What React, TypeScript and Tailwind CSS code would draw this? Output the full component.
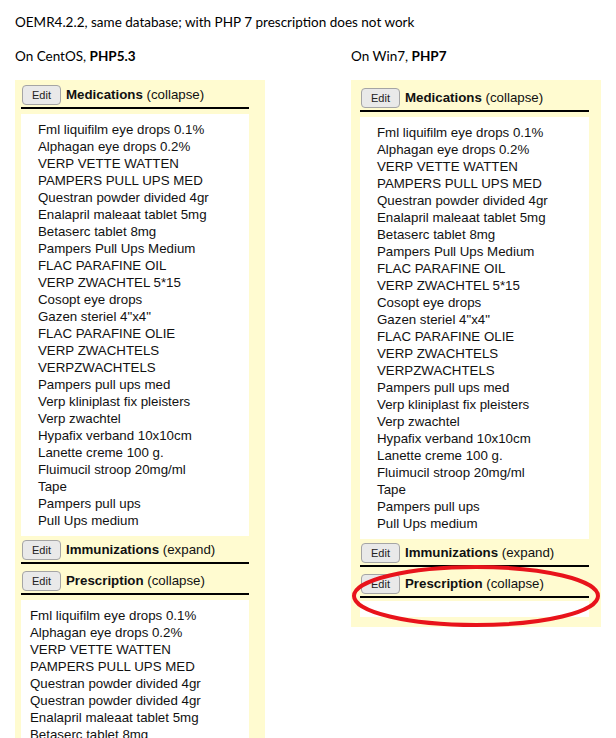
import React from "react";

const meds = [
  "Fml liquifilm eye drops 0.1%",
  "Alphagan eye drops 0.2%",
  "VERP VETTE WATTEN",
  "PAMPERS PULL UPS MED",
  "Questran powder divided 4gr",
  "Enalapril maleaat tablet 5mg",
  "Betaserc tablet 8mg",
  "Pampers Pull Ups Medium",
  "FLAC PARAFINE OIL",
  "VERP ZWACHTEL 5*15",
  "Cosopt eye drops",
  'Gazen steriel 4"x4"',
  "FLAC PARAFINE OLIE",
  "VERP ZWACHTELS",
  "VERPZWACHTELS",
  "Pampers pull ups med",
  "Verp kliniplast fix pleisters",
  "Verp zwachtel",
  "Hypafix verband 10x10cm",
  "Lanette creme 100 g.",
  "Fluimucil stroop 20mg/ml",
  "Tape",
  "Pampers pull ups",
  "Pull Ups medium",
];

const rx = [
  "Fml liquifilm eye drops 0.1%",
  "Alphagan eye drops 0.2%",
  "VERP VETTE WATTEN",
  "PAMPERS PULL UPS MED",
  "Questran powder divided 4gr",
  "Questran powder divided 4gr",
  "Enalapril maleaat tablet 5mg",
  "Betaserc tablet 8mg",
];

function EditBtn() {
  return (
    <span className="flex h-[20px] w-[39px] shrink-0 items-center justify-center rounded-[4px] border border-[#a5a5a5] bg-[#e9e9e9] text-[11px] leading-none text-[#222]">
      Edit
    </span>
  );
}

function Header({ title, action }: { title: string; action: string }) {
  return (
    <div className="flex h-[26px] items-center gap-[5px] border-b-2 border-black pl-[1px] text-[13.3px] text-[#111]">
      <EditBtn />
      <span>
        <b>{title}</b> ({action})
      </span>
    </div>
  );
}

function List({ items, indent }: { items: string[]; indent: string }) {
  return (
    <div className={`bg-white pt-[7px] pb-[7px] ${indent}`}>
      {items.map((t, i) => (
        <div key={i} className="h-[17px] whitespace-nowrap text-[13.3px] leading-[17px] text-[#111]">
          {t}
        </div>
      ))}
    </div>
  );
}

export default function App() {
  return (
    <div className="relative h-[738px] w-[616px] overflow-hidden bg-white" style={{ fontFamily: '"Liberation Sans", Arial, sans-serif' }}>
      <div className="px-[15px] pt-[12px]">
        <p className="h-[20px] text-[13.5px] leading-[20px] text-black" style={{ fontFamily: "Lato, sans-serif" }}>
          OEMR4.2.2, same database; with PHP 7 prescription does not work
        </p>
        <div className="mt-[14px] flex gap-[86px]">
          <div className="w-[250px]">
            <p className="h-[20px] text-[13.5px] leading-[20px] text-black" style={{ fontFamily: "Lato, sans-serif" }}>
              On CentOS, <b>PHP5.3</b>
            </p>
            <div className="mt-[14px] bg-[#fffbd0] pt-[3px] pr-[16px] pl-[6px] pb-[10px]">
              <Header title="Medications" action="collapse" />
              <div className="mt-[5px] h-[422px]">
                <List items={meds} indent="pl-[17px]" />
              </div>
              <div className="mt-[2px]">
                <Header title="Immunizations" action="expand" />
              </div>
              <div className="mt-[5px]">
                <Header title="Prescription" action="collapse" />
              </div>
              <div className="mt-[5px]">
                <List items={rx} indent="pl-[9px]" />
              </div>
            </div>
          </div>
          <div className="w-[250px]">
            <p className="h-[20px] text-[13.5px] leading-[20px] text-black" style={{ fontFamily: "Lato, sans-serif" }}>
              On Win7, <b>PHP7</b>
            </p>
            <div className="mt-[14px] bg-[#fffbd0] pt-[6px] pr-[12px] pl-[9px] pb-[10px]">
              <Header title="Medications" action="collapse" />
              <div className="mt-[5px] h-[422px]">
                <List items={meds} indent="pl-[17px]" />
              </div>
              <div className="mt-[2px]">
                <Header title="Immunizations" action="expand" />
              </div>
              <div className="mt-[5px]">
                <Header title="Prescription" action="collapse" />
              </div>
              <div className="mt-[3px] h-[16px] bg-white" />
            </div>
          </div>
        </div>
      </div>
      <svg className="absolute left-[350px] top-[562px]" width="256" height="70" viewBox="0 0 256 70">
        <ellipse cx="126" cy="34" rx="122" ry="29" fill="none" stroke="#e8131b" strokeWidth="4" />
      </svg>
    </div>
  );
}
